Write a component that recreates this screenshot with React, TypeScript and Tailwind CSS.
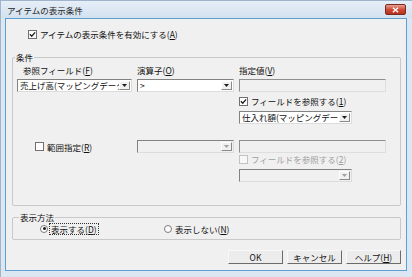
import React from 'react'

const FONT = { fontFamily: '"Noto Sans CJK JP", "Noto Sans", sans-serif' }

function Check({ checked, disabled }: { checked?: boolean; disabled?: boolean }) {
  return (
    <span
      className={
        disabled
          ? 'w-[9px] h-[9px] border border-[#c2c2c2] bg-[#f7f7f7] flex items-center justify-center shrink-0'
          : 'w-[9px] h-[9px] border border-[#707070] bg-white flex items-center justify-center shrink-0'
      }
    >
      {checked && (
        <svg viewBox="0 0 8 8" className="w-[7px] h-[7px]">
          <path d="M1 3.8 L3.1 6 L7 1.6" stroke="#1c1c1c" strokeWidth="1.5" fill="none" />
        </svg>
      )}
    </span>
  )
}

function Radio({ checked }: { checked?: boolean }) {
  return (
    <span className="w-[8px] h-[8px] rounded-full border border-[#7a7a7a] bg-white flex items-center justify-center shrink-0">
      {checked && <span className="w-[3px] h-[3px] rounded-full bg-[#1c1c1c]" />}
    </span>
  )
}

// 下三角のドロップダウンボタン
function DropBtn({ disabled }: { disabled?: boolean }) {
  return (
    <span className="w-[11px] h-[9px] mr-[1px] bg-[#f0f0f0] border border-t-white border-l-white border-r-[#8a8a8a] border-b-[#8a8a8a] flex items-center justify-center shrink-0">
      <svg viewBox="0 0 5 3" className="w-[5px] h-[3px]">
        <path d="M0 0 H5 L2.5 3 Z" fill={disabled ? '#a0a0a0' : '#1c1c1c'} />
      </svg>
    </span>
  )
}

function Combo({ w, text, disabled }: { w: string; text?: string; disabled?: boolean }) {
  return (
    <div
      className={
        (disabled ? 'bg-[#f0f0f0] ' : 'bg-white ') +
        w +
        ' h-[13px] border border-t-[#828282] border-l-[#828282] border-r-[#dcdcdc] border-b-[#dcdcdc] flex items-center'
      }
    >
      <span className="flex-1 min-w-0 overflow-hidden whitespace-nowrap pl-[2px] leading-[11px] text-[#111]">
        {text}
      </span>
      <DropBtn disabled={disabled} />
    </div>
  )
}

function Field({ w }: { w: string }) {
  return (
    <div
      className={
        w +
        ' h-[13px] bg-[#f0f0f0] border border-t-[#8f8f8f] border-l-[#8f8f8f] border-r-[#dedede] border-b-[#dedede]'
      }
    />
  )
}

function Btn({ children }: { children: React.ReactNode }) {
  return (
    <div className="w-[55px] h-[14px] border border-t-[#f8f8f8] border-l-[#f8f8f8] border-r-[#6b6b6b] border-b-[#6b6b6b] bg-[#ececec] flex items-center justify-center leading-[12px] text-[#111]">
      {children}
    </div>
  )
}

export default function App() {
  return (
    <div
      className="w-[412px] h-[277px] bg-[#dce7f3] flex flex-col text-[8.5px] leading-[10px] text-[#111] overflow-hidden"
      style={FONT}
    >
      {/* タイトルバー */}
      <div className="h-[18px] shrink-0 flex items-center pl-[6px] pr-[6px] bg-gradient-to-b from-[#e6eef7] to-[#d3e1ef] border-t border-l border-[#9fb4ca]">
        <span className="flex-1 text-[#1e1e1e]">アイテムの表示条件</span>
        <span className="w-[21px] h-[11px] rounded-[2px] border border-[#7a2a22] bg-gradient-to-b from-[#e8a090] via-[#cf4a36] to-[#b7301f] flex items-center justify-center">
          <svg viewBox="0 0 8 6" className="w-[7px] h-[6px]">
            <path d="M1 0.5 L7 5.5 M7 0.5 L1 5.5" stroke="white" strokeWidth="1.6" />
          </svg>
        </span>
      </div>

      {/* クライアント領域 */}
      <div className="flex-1 min-h-0 pl-[4px] pr-[5px] pb-[6px] border-l border-[#9fb4ca]">
        <div className="h-full bg-[#f0f0f0] border border-[#5d9fd3] pl-[6px] pr-[5px] flex flex-col">
          <div className="mt-[9px] h-[12px] flex items-center gap-[3px] pl-[16px]">
            <Check checked />
            <span>
              アイテムの表示条件を有効にする(<span className="underline">A</span>)
            </span>
          </div>

          {/* 条件 */}
          <div className="relative mt-[17px] h-[149px] border border-[#c8c8c8] rounded-[2px] pl-[4px] pt-[7px]">
            <span className="absolute left-[2px] top-[-6px] px-[1px] bg-[#f0f0f0] leading-[10px]">条件</span>
            <div className="flex gap-[5px] h-[10px] items-center">
              <span className="w-[115px] pl-[6px]">
                参照フィールド(<span className="underline">F</span>)
              </span>
              <span className="w-[97px]">
                演算子(<span className="underline">O</span>)
              </span>
              <span>
                指定値(<span className="underline">V</span>)
              </span>
            </div>
            <div className="flex gap-[5px] mt-[4px]">
              <Combo w="w-[115px]" text="売上げ高(マッピングデータ)" />
              <Combo w="w-[97px]" text=">" />
              <Field w="w-[147px]" />
            </div>
            <div className="flex gap-[3px] mt-[4px] h-[10px] items-center pl-[222px]">
              <Check checked />
              <span>
                フィールドを参照する(<span className="underline">1</span>)
              </span>
            </div>
            <div className="flex mt-[5px] pl-[222px]">
              <Combo w="w-[113px]" text="仕入れ額(マッピングデータ)" />
            </div>
            <div className="flex gap-[5px] mt-[16px] items-center">
              <div className="w-[115px] flex items-center gap-[3px] pl-[18px]">
                <Check />
                <span>
                  範囲指定(<span className="underline">R</span>)
                </span>
              </div>
              <Combo w="w-[97px]" disabled />
              <Field w="w-[147px]" />
            </div>
            <div className="flex gap-[3px] h-[10px] mt-[1px] items-center pl-[222px] text-[#a0a0a0]">
              <Check disabled />
              <span>
                フィールドを参照する(<span className="underline">2</span>)
              </span>
            </div>
            <div className="flex mt-[5px] pl-[222px]">
              <Combo w="w-[113px]" disabled />
            </div>
          </div>

          {/* 表示方法 */}
          <div className="relative mt-[11px] h-[23px] border border-[#c8c8c8] rounded-[2px] flex items-center">
            <span className="absolute left-[6px] top-[-6px] px-[1px] bg-[#f0f0f0] leading-[10px]">表示方法</span>
            <div className="w-[151px] pl-[27px] flex items-center gap-[2px]">
              <Radio checked />
              <span className="outline outline-1 outline-dotted outline-[#333] px-[1px] leading-[10px]">
                表示する(<span className="underline">D</span>)
              </span>
            </div>
            <div className="flex items-center gap-[3px]">
              <Radio />
              <span>
                表示しない(<span className="underline">N</span>)
              </span>
            </div>
          </div>

          <div className="mt-[10px] flex justify-end gap-[4px] pr-[0px]">
            <Btn>OK</Btn>
            <Btn>キャンセル</Btn>
            <Btn>
              ヘルプ(<span className="underline">H</span>)
            </Btn>
          </div>
        </div>
      </div>
    </div>
  )
}
